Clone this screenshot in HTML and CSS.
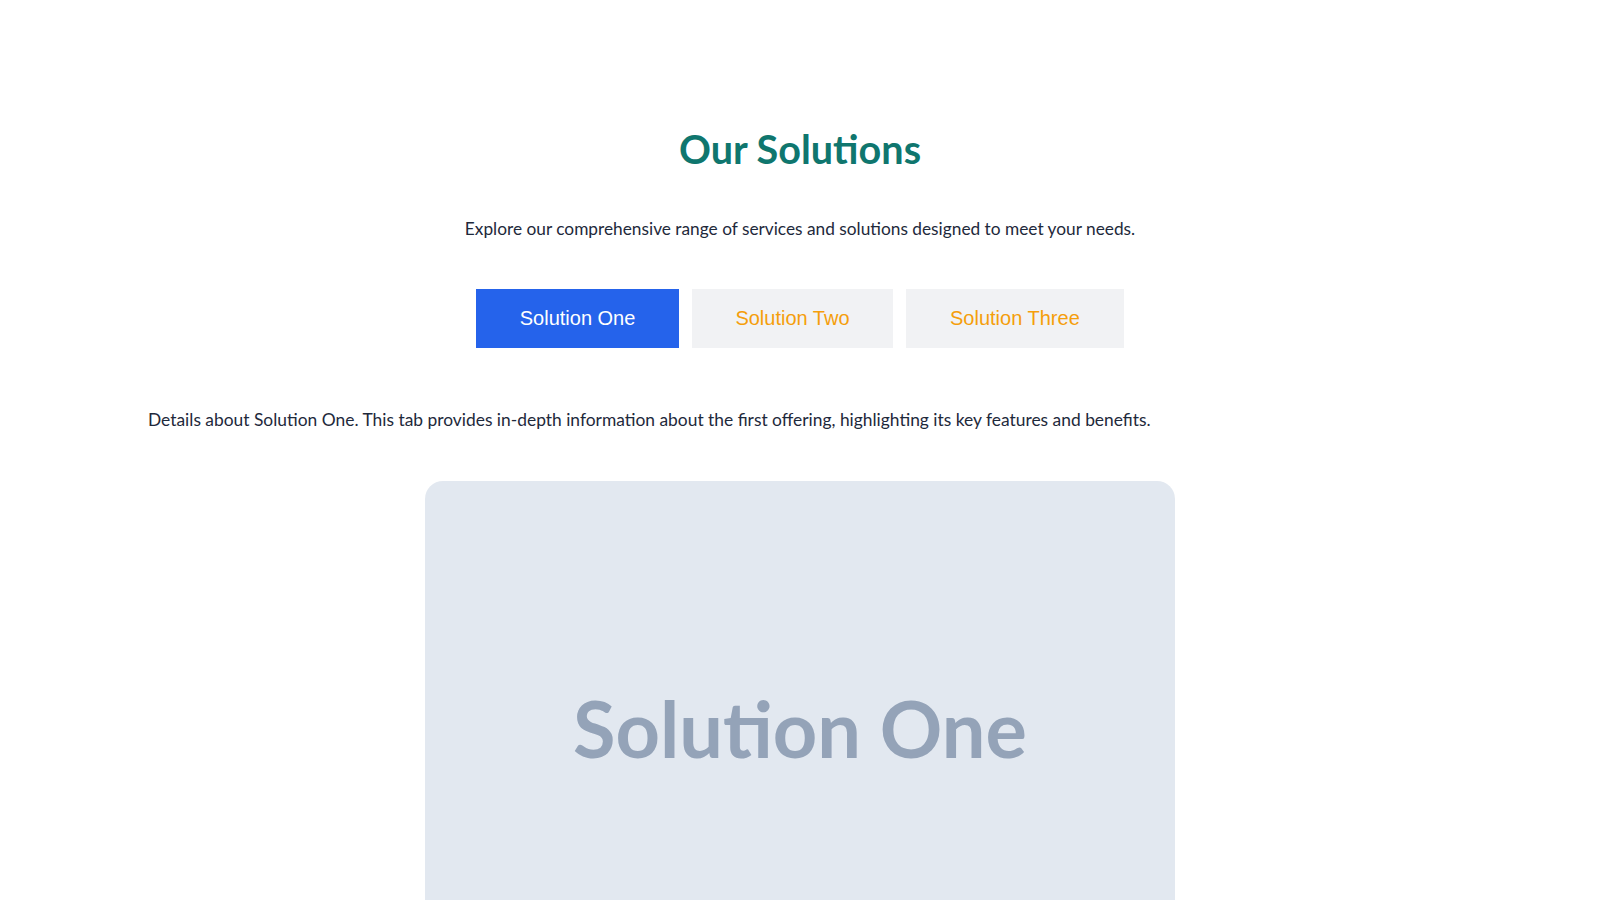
FILE: index.html
```html
<!DOCTYPE html>
<html lang="en">
<head>
<meta charset="utf-8">
<title>Our Solutions</title>
<link rel="stylesheet" href="styles.css">
</head>
<body>
<section class="solutions">
  <div class="container">
    <h1 class="title">Our Solutions</h1>
    <p class="subtitle">Explore our comprehensive range of services and solutions designed to meet your needs.</p>
    <div class="tabs">
      <button class="tab tab-active">Solution One</button>
      <button class="tab">Solution Two</button>
      <button class="tab">Solution Three</button>
    </div>
    <div class="tab-panel">
      <p class="details">Details about Solution One. This tab provides in-depth information about the first offering, highlighting its key features and benefits.</p>
      <div class="figure">
        <span class="figure-label">Solution One</span>
      </div>
    </div>
  </div>
</section>
</body>
</html>
```

FILE: styles.css
```css
* { box-sizing: border-box; }
html, body { margin: 0; padding: 0; background: #ffffff; }
body {
  font-family: "Lato", "Open Sans", sans-serif;
  color: #1e293b;
}
.solutions {
  padding-top: 125px;
}
.container {
  max-width: 1304px;
  margin: 0 auto;
}
.title {
  margin: 0;
  text-align: center;
  font-size: 39.6px;
  line-height: 48px;
  font-weight: 700;
  color: #0f766e;
}
.subtitle {
  margin: 44px 0 0;
  text-align: center;
  font-size: 17.3px;
  line-height: 24px;
  color: #1e293b;
}
.tabs {
  margin-top: 48px;
  display: flex;
  justify-content: center;
  gap: 13px;
}
.tab {
  font-family: "Liberation Sans", Arial, sans-serif;
  font-size: 20px;
  line-height: 23px;
  padding: 18px 43.5px;
  border: 0;
  border-radius: 0;
  background: #f1f2f4;
  color: #f59e0b;
  cursor: pointer;
}
.tab:last-child {
  padding: 18px 44px;
}
.tab-active {
  background: #2563eb;
  color: #ffffff;
}
.tab-panel {
  margin-top: 60px;
}
.details {
  margin: 0;
  font-size: 17.4px;
  line-height: 24px;
  color: #1e293b;
}
.figure {
  margin: 49px auto 0;
  width: 750px;
  height: 495px;
  border-radius: 18px;
  background: #e2e8f0;
  display: flex;
  align-items: center;
  justify-content: center;
}
.figure-label {
  font-family: "Lato", sans-serif;
  font-weight: 700;
  font-size: 77.5px;
  color: #94a3b8;
}
```
